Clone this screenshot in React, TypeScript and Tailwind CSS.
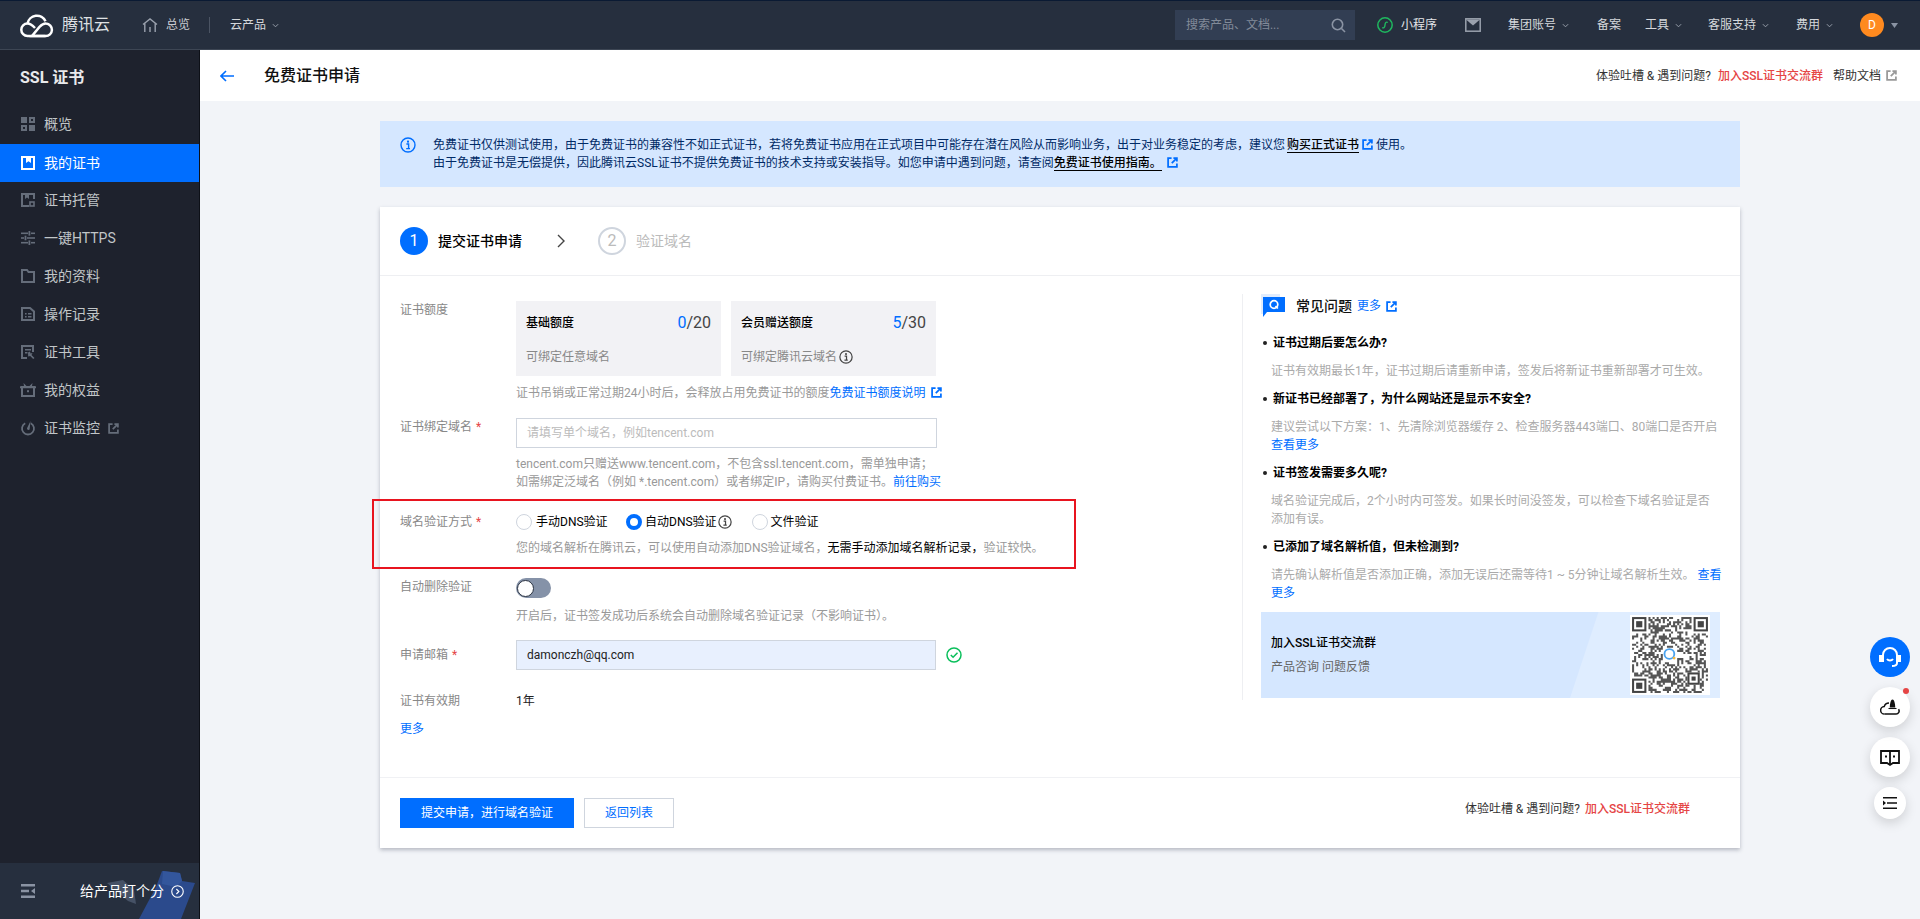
import { ReactNode } from "react";

const sideItems = [
  { title: "概览", icon: "grid" },
  { title: "我的证书", icon: "cert", active: true },
  { title: "证书托管", icon: "host" },
  { title: "一键HTTPS", icon: "sliders" },
  { title: "我的资料", icon: "folder" },
  { title: "操作记录", icon: "record" },
  { title: "证书工具", icon: "tool" },
  { title: "我的权益", icon: "gift" },
  { title: "证书监控", icon: "gauge", ext: true },
];

const faqs = [
  {
    q: "证书过期后要怎么办?",
    a: <>证书有效期最长1年，证书过期后请重新申请，签发后将新证书重新部署才可生效。</>,
  },
  {
    q: "新证书已经部署了，为什么网站还是显示不安全?",
    a: (
      <>
        建议尝试以下方案：1、先清除浏览器缓存 2、检查服务器443端口、80端口是否开启
        <br />
        <span className="text-[#006eff]">查看更多</span>
      </>
    ),
  },
  {
    q: "证书签发需要多久呢?",
    a: (
      <>
        域名验证完成后，2个小时内可签发。如果长时间没签发，可以检查下域名验证是否
        <br />
        添加有误。
      </>
    ),
  },
  {
    q: "已添加了域名解析值，但未检测到?",
    a: (
      <>
        请先确认解析值是否添加正确，添加无误后还需等待1 ~ 5分钟让域名解析生效。
        <span className="text-[#006eff]"> 查看</span>
        <br />
        <span className="text-[#006eff]">更多</span>
      </>
    ),
  },
];

function Chevron({ className = "" }: { className?: string }) {
  return (
    <svg viewBox="0 0 8 5" className={`h-[5px] w-[7px] ${className}`} fill="none" stroke="#9aa1ad" strokeWidth="1.1">
      <path d="M1 1l3 3 3-3" />
    </svg>
  );
}

function ExtIcon({ color = "#006eff", className = "" }: { color?: string; className?: string }) {
  return (
    <svg viewBox="0 0 12 12" className={`inline-block h-[11px] w-[11px] ${className}`} fill="none" stroke={color} strokeWidth="1.9">
      <path d="M5 1.2H1.2v9.6h9.6V7" />
      <path d="M7 1.2h3.8V5M10.5 1.5 5.2 6.8" />
    </svg>
  );
}

function InfoIcon({ size = 14, color = "#444" }: { size?: number; color?: string }) {
  return (
    <svg viewBox="0 0 16 16" width={size} height={size} className="inline-block shrink-0" fill="none">
      <circle cx="8" cy="8" r="7" stroke={color} strokeWidth="1.4" />
      <rect x="7" y="3.6" width="2" height="2" fill={color} />
      <path d="M6.4 7h2.200v4.200M6.200 11.600h3.800" stroke={color} strokeWidth="1.4" />
    </svg>
  );
}

function SideIcon({ name, color }: { name: string; color: string }) {
  const s = { fill: "none", stroke: color, strokeWidth: 2 };
  return (
    <svg viewBox="0 0 14 14" className="h-[14px] w-[14px] shrink-0 overflow-visible">
      {name === "grid" && (
        <g fill={color}>
          <rect width="6" height="6" />
          <rect x="8" width="6" height="6" />
          <rect y="8" width="6" height="6" />
          <rect x="8" y="8" width="6" height="6" />
          <rect x="10" y="2" width="2" height="2" fill="#1e222d" />
          <rect x="2" y="10" width="2" height="2" fill="#1e222d" />
        </g>
      )}
      {name === "cert" && (
        <g>
          <rect x="1" y="1" width="12" height="12" {...s} />
          <path d="M5 1h5v6L7.500 5.200 5 7z" fill={color} />
        </g>
      )}
      {name === "host" && (
        <g>
          <path d="M8 13H1V1h12v5" {...s} />
          <path d="M4 1h4v5L6 4.600 4 6z" fill={color} />
          <rect x="9" y="9" width="4" height="4" {...s} strokeWidth="1.6" />
        </g>
      )}
      {name === "sliders" && (
        <g fill={color}>
          <rect y="1.500" width="7" height="1.600" />
          <rect x="10" y="1.500" width="4" height="1.600" />
          <rect x="7.500" y="0" width="1.800" height="4.600" />
          <rect y="6.200" width="3" height="1.600" />
          <rect x="6" y="6.200" width="8" height="1.600" />
          <rect x="3.600" y="4.700" width="1.800" height="4.600" />
          <rect y="10.900" width="7" height="1.600" />
          <rect x="10" y="10.900" width="4" height="1.600" />
          <rect x="7.500" y="9.400" width="1.800" height="4.600" />
        </g>
      )}
      {name === "folder" && <path d="M1 13V1h5l1.500 2H13v10z" {...s} />}
      {name === "record" && (
        <g>
          <path d="M1 1h8l4 3.500V13H1z" {...s} />
          <path d="M4 6h1.600v1.600H4zM4 9h1.600v1.600H4zM7 6h3.500v1.600H7zM7 9h3.500v1.600H7z" fill={color} />
        </g>
      )}
      {name === "tool" && (
        <g>
          <path d="M6 13H1V1h11v6" {...s} />
          <path d="M4 4h6v1.600H4zM4 7h2.500v1.600H4z" fill={color} />
          <path d="M7 7.500l2-1 .5 2 2-.5L10.500 10l3 3-1.300 1-3-3-2 .5z" fill={color} />
        </g>
      )}
      {name === "gift" && (
        <g>
          <rect x="1" y="4" width="12" height="9" {...s} />
          <path d="M-1 3.200h16v2H-1zM2.500 0l3 3H3zM11.500 0l-3 3H11z" fill={color} />
          <rect x="6" y="7.200" width="2" height="2" fill={color} />
        </g>
      )}
      {name === "gauge" && (
        <g>
          <path d="M4.200 2.200A6 6 0 1 0 9.800 2.200" {...s} strokeWidth="1.800" />
          <path d="M9.500 0 6 7.200a1.600 1.600 0 0 0 2.600 1.400z" fill={color} />
        </g>
      )}
    </svg>
  );
}

function Sidebar() {
  return (
    <aside className="flex w-[200px] shrink-0 flex-col border-r border-[#0d1017] bg-[#1e222d]">
      <div className="flex h-[55px] items-center pl-[20px] text-[16px] font-bold text-[#e8e9eb]">SSL 证书</div>
      <nav className="flex-1">
        {sideItems.map((item) => (
          <div
            key={item.title}
            className={`flex h-[38px] items-center pl-[21px] text-[14px] ${
              item.active ? "mb-[-1px] mt-px bg-[#006eff] text-white" : "text-[#c1c6c8]"
            }`}
          >
            <SideIcon name={item.icon} color={item.active ? "#ffffff" : "#656d7a"} />
            <span className="ml-[9px]">{item.title}</span>
            {item.ext && <ExtIcon color="#656d7a" className="ml-[8px]" />}
          </div>
        ))}
      </nav>
      <div className="relative flex h-[56px] items-center overflow-hidden bg-[#262f3e] pl-[21px]">
        <svg viewBox="0 0 90 50" className="absolute bottom-0 left-[106px] h-[50px] w-[90px]">
          <path d="M1 14l16-3 11 10 2 14-8-3z" fill="#465266" />
          <path d="M33 50 50 18l6-16 18 2 2 8 13 2-14 36z" fill="#2b4a8c" />
          <path d="M57 2l17 2 2 8-6 6-14-3z" fill="#33569c" />
        </svg>
        <svg viewBox="0 0 14 14" className="relative h-[14px] w-[14px]" fill="#8a93a3">
          <path d="M0 0h14v2.400H0zM0 5.800h8v2.400H0zM0 11.600h14V14H0zM14 4v6l-4-3z" />
        </svg>
        <span className="relative ml-[45px] text-[14px] text-white">给产品打个分</span>
        <svg viewBox="0 0 14 14" className="relative ml-[7px] h-[13px] w-[13px]" fill="none" stroke="#fff" strokeWidth="1.200">
          <circle cx="7" cy="7" r="6.200" />
          <path d="M5.800 4.300 8.500 7l-2.700 2.700" />
        </svg>
      </div>
    </aside>
  );
}

function NavLink({ children, ml, chev = true }: { children: ReactNode; ml: string; chev?: boolean }) {
  return (
    <div className={`flex items-center ${ml} text-[12px] text-[#d5d8dc]`}>
      {children}
      {chev && <Chevron className="ml-[6px]" />}
    </div>
  );
}

function TopBar() {
  return (
    <header className="flex h-[50px] shrink-0 items-center border-b border-t border-b-[#3d4654] border-t-[#0a1a33] bg-[#262f3e]">
      <svg viewBox="0 0 34 25" className="ml-[20px] h-[25px] w-[34px]" fill="none" stroke="#fff" strokeWidth="2.500">
        <path d="M7.500 10.500A9.500 9.500 0 0 1 25.500 8.300" />
        <path d="M12 23h13.500a6.200 6.200 0 0 0 .5-12.400c-3-.2-4.500 1.300-6.500 3.300z" />
        <path d="M25.500 23H7.500a6.200 6.200 0 0 1 0-12.400c3.200 0 5 1.800 7.500 4.400" />
      </svg>
      <span className="ml-[8px] text-[16px] text-[#dfe1e4]">腾讯云</span>
      <svg viewBox="0 0 16 15" className="ml-[32px] h-[15px] w-[16px]" fill="none" stroke="#9aa1ad" strokeWidth="1.400">
        <path d="M1 6.500 8 1l7 5.500M2.800 5.500V14M13.200 5.500V14M8 9v5" />
      </svg>
      <span className="ml-[8px] text-[12px] text-[#c9ccd1]">总览</span>
      <div className="ml-[19px] h-[16px] w-px bg-[#4b5463]" />
      <NavLink ml="ml-[20px]">云产品</NavLink>

      <div className="ml-auto flex h-[30px] w-[180px] items-center justify-between bg-[#323e53] pl-[11px] pr-[9px] text-[12px] text-[#828b99]">
        <span>搜索产品、文档...</span>
        <svg viewBox="0 0 15 15" className="h-[15px] w-[15px]" fill="none" stroke="#8a93a3" strokeWidth="1.600">
          <circle cx="6.500" cy="6.500" r="5.200" />
          <path d="m10.500 10.500 3.500 3.500" />
        </svg>
      </div>
      <svg viewBox="0 0 16 16" className="ml-[22px] h-[16px] w-[16px]" fill="none">
        <circle cx="8" cy="8" r="7.200" stroke="#1fb85f" strokeWidth="1.500" />
        <path d="M5.200 10.500c1.500 1 2.700 0 2.800-2.500s1.300-3.500 2.800-2.500" stroke="#1fb85f" strokeWidth="1.400" />
      </svg>
      <span className="ml-[8px] text-[12px] text-[#e3e5e8]">小程序</span>
      <svg viewBox="0 0 16 14" className="ml-[28px] h-[14px] w-[16px]" fill="none">
        <rect x="0.800" y="0.800" width="14.400" height="12.400" stroke="#9aa1ad" strokeWidth="1.500" />
        <path d="M1 1.500h14L8 7.500z" fill="#9aa1ad" />
      </svg>
      <NavLink ml="ml-[27px]">集团账号</NavLink>
      <NavLink ml="ml-[28px]" chev={false}>备案</NavLink>
      <NavLink ml="ml-[24px]">工具</NavLink>
      <NavLink ml="ml-[26px]">客服支持</NavLink>
      <NavLink ml="ml-[27px]">费用</NavLink>
      <div className="ml-[27px] flex h-[24px] w-[24px] items-center justify-center rounded-full bg-[#ff8a1f] text-[12px] text-white">
        D
      </div>
      <svg viewBox="0 0 7 5" className="ml-[7px] mr-[22px] h-[5px] w-[7px]" fill="#8a93a3">
        <path d="M0 0h7L3.500 5z" />
      </svg>
    </header>
  );
}

function FormRow({ label, required, children }: { label: string; required?: boolean; children: ReactNode }) {
  return (
    <div className="flex">
      <div className="h-[18px] w-[116px] shrink-0 text-[12px] leading-[18px] text-[#888]">
        {label}
        {required && <span className="ml-[4px] text-[#e54545]">*</span>}
      </div>
      <div className="flex-1">{children}</div>
    </div>
  );
}

function Hint({ children }: { children: ReactNode }) {
  return <div className="text-[12px] leading-[18px] text-[#999]">{children}</div>;
}

function QuotaBox({ title, used, total, sub, info }: { title: string; used: number; total: number; sub: string; info?: boolean }) {
  return (
    <div className="h-[75px] w-[205px] bg-[#f2f2f5] px-[10px]">
      <div className="flex h-[44px] items-center justify-between">
        <span className="text-[12px] font-medium text-black">{title}</span>
        <span className="text-[16px] text-[#444]">
          <span className="text-[#006eff]">{used}</span>/{total}
        </span>
      </div>
      <div className="flex items-center gap-[2px] pt-[1px] text-[12px] leading-[22px] text-[#888]">
        {sub}
        {info && <InfoIcon />}
      </div>
    </div>
  );
}

function Radio({ checked }: { checked?: boolean }) {
  return (
    <span
      className={`block h-[16px] w-[16px] rounded-full bg-white ${
        checked ? "border-[4px] border-[#006eff]" : "border border-[#cfd5de]"
      }`}
    />
  );
}

function FormColumn() {
  return (
    <div className="w-[862px] shrink-0 pl-[20px] pt-[25px]">
      <FormRow label="证书额度">
        <div className="flex gap-[10px]">
          <QuotaBox title="基础额度" used={0} total={20} sub="可绑定任意域名" />
          <QuotaBox title="会员赠送额度" used={5} total={30} sub="可绑定腾讯云域名" info />
        </div>
        <div className="mt-[8px]">
          <Hint>
            证书吊销或正常过期24小时后，会释放占用免费证书的额度
            <span className="text-[#006eff]">免费证书额度说明</span>
            <ExtIcon className="ml-[5px] align-[-1px]" />
          </Hint>
        </div>
      </FormRow>

      <div className="mt-[16px]">
        <FormRow label="证书绑定域名" required>
          <div className="flex h-[30px] w-[421px] items-center border border-[#cfd5de] bg-white pl-[10px] text-[12px] text-[#bbb]">
            请填写单个域名，例如tencent.com
          </div>
          <div className="mt-[7px]">
            <Hint>tencent.com只赠送www.tencent.com，不包含ssl.tencent.com，需单独申请；</Hint>
            <Hint>
              如需绑定泛域名（例如 *.tencent.com）或者绑定IP，请购买付费证书。
              <span className="text-[#006eff]">前往购买</span>
            </Hint>
          </div>
        </FormRow>
      </div>

      <div className="relative mt-[22px]">
        <FormRow label="域名验证方式" required>
          <div className="flex h-[18px] items-center text-[12px] text-black">
            <Radio />
            <span className="ml-[4px] w-[90px]">手动DNS验证</span>
            <Radio checked />
            <span className="ml-[3px]">自动DNS验证</span>
            <span className="ml-[1px] mr-[20px] flex">
              <InfoIcon />
            </span>
            <Radio />
            <span className="ml-[3px]">文件验证</span>
          </div>
          <div className="mt-[8px]">
            <Hint>
              您的域名解析在腾讯云，可以使用自动添加DNS验证域名，
              <span className="text-black">无需手动添加域名解析记录，</span>
              验证较快。
            </Hint>
          </div>
        </FormRow>
        <div className="absolute left-[-28px] top-[-14px] h-[70px] w-[704px] border-2 border-[#e8141f]" />
      </div>

      <div className="mt-[21px]">
        <FormRow label="自动删除验证">
          <div className="flex h-[20px] w-[35px] items-center rounded-full bg-[#8592a8] pl-[1px] pr-[1px]">
            <span className="h-[17px] w-[17px] rounded-full border border-[#2a3342] bg-white" />
          </div>
          <div className="mt-[9px]">
            <Hint>开启后，证书签发成功后系统会自动删除域名验证记录（不影响证书）。</Hint>
          </div>
        </FormRow>
      </div>

      <div className="mt-[15px]">
        <div className="flex">
          <div className="flex h-[30px] w-[116px] shrink-0 items-center text-[12px] text-[#888]">
            申请邮箱<span className="ml-[4px] text-[#e54545]">*</span>
          </div>
          <div className="flex h-[30px] w-[420px] items-center border border-[#cfd5de] bg-[#e8f0fe] pl-[10px] text-[12px] text-[#222]">
            damonczh@qq.com
          </div>
          <svg viewBox="0 0 16 16" className="ml-[10px] mt-[7px] h-[16px] w-[16px]" fill="none" stroke="#0abf5b" strokeWidth="1.500">
            <circle cx="8" cy="8" r="7" />
            <path d="m4.800 8 2.300 2.300L11.500 5.800" />
          </svg>
        </div>
      </div>

      <div className="mt-[22px]">
        <FormRow label="证书有效期">
          <div className="text-[12px] leading-[18px] text-[#222]">1年</div>
        </FormRow>
      </div>
      <div className="mt-[10px] text-[12px] leading-[18px] text-[#006eff]">更多</div>
    </div>
  );
}

function qrPath() {
  const n = 37;
  let seed = 20231;
  const finder = (x: number, y: number) => x < 8 && y < 8;
  let d = "";
  for (let y = 0; y < n; y++) {
    for (let x = 0; x < n; x++) {
      seed = (seed * 1103515245 + 12345) & 0x7fffffff;
      const inFinder = finder(x, y) || finder(n - 1 - x, y) || finder(x, n - 1 - y);
      const inLogo = x > 14 && x < 22 && y > 14 && y < 22;
      const inAlign = x > 26 && x < 33 && y > 26 && y < 33;
      if (inFinder || inLogo || inAlign) continue;
      if ((seed >> 16) % 100 < 45) d += `M${x} ${y}h1v1h-1z`;
    }
  }
  return d;
}

function Finder({ x, y, size = 7 }: { x: number; y: number; size?: number }) {
  return (
    <g>
      <rect x={x + 0.5} y={y + 0.5} width={size - 1} height={size - 1} fill="none" stroke="#444" />
      <rect x={x + 2} y={y + 2} width={size - 4} height={size - 4} fill="#444" />
    </g>
  );
}

function QrCode() {
  return (
    <svg viewBox="-1 -1 39 39" className="relative h-[80px] w-[80px] bg-white">
      <path d={qrPath()} fill="#555" />
      <Finder x={0} y={0} />
      <Finder x={30} y={0} />
      <Finder x={0} y={30} />
      <Finder x={27} y={27} size={6} />
      <circle cx="18.200" cy="18" r="2.400" fill="none" stroke="#4aa3f0" strokeWidth="0.900" />
      <circle cx="20.500" cy="20" r="0.700" fill="#f5b942" />
    </svg>
  );
}

function FaqColumn() {
  return (
    <div className="flex-1 pl-[18px] pr-[20px] pt-[18px]">
      <div className="flex h-[24px] items-center">
        <svg viewBox="0 0 24 24" className="h-[24px] w-[24px] shrink-0">
          <path d="M0 0h19v3H0zM0 3h2v17H0z" fill="#e0ecfd" />
          <path d="M2 3h22v15H6l-4 5z" fill="#006eff" />
          <circle cx="13" cy="10.500" r="3.800" fill="none" stroke="#fff" strokeWidth="1.700" />
          <path d="m14.500 12 2.300 2.500" stroke="#fff" strokeWidth="1.700" />
        </svg>
        <span className="ml-[11px] text-[14px] font-medium text-[#111]">常见问题</span>
        <span className="ml-[5px] text-[12px] text-[#006eff]">更多</span>
        <ExtIcon className="ml-[5px]" />
      </div>
      <div className="mt-[16px]">
        {faqs.map((f) => (
          <div key={f.q} className="mb-[10px]">
            <div className="flex items-center text-[12px] font-bold leading-[18px] text-black">
              <span className="ml-[2px] mr-[6px] h-[4px] w-[4px] rounded-full bg-[#222]" />
              {f.q}
            </div>
            <div className="mt-[10px] whitespace-nowrap pl-[10px] text-[12px] leading-[18px] text-[#aaa]">{f.a}</div>
          </div>
        ))}
      </div>
      <div className="relative flex h-[86px] w-[459px] items-center justify-between overflow-hidden bg-[#d5e7ff] pl-[10px] pr-[10px]">
        <div className="absolute right-0 top-0 h-full w-[150px] bg-[#dfedff] [clip-path:polygon(19%_0,100%_0,100%_100%,0_100%)]" />
        <div className="relative">
          <div className="text-[12px] font-medium leading-[18px] text-black">加入SSL证书交流群</div>
          <div className="mt-[6px] text-[12px] leading-[18px] text-[#666]">产品咨询 问题反馈</div>
        </div>
        <QrCode />
      </div>
    </div>
  );
}

function FloatButtons() {
  const round = "flex items-center justify-center rounded-full bg-white shadow-[0_4px_12px_rgba(0,0,0,0.15)]";
  return (
    <div className="absolute right-[10px] top-[637px] flex w-[40px] flex-col items-center gap-[10px]">
      <div className="flex h-[40px] w-[40px] items-center justify-center rounded-full bg-[#006eff]">
        <svg viewBox="0 0 22 22" className="h-[22px] w-[22px]" fill="none" stroke="#fff" strokeWidth="2">
          <path d="M4 11V9a7 7 0 0 1 14 0v8c0 2-2 3-5 3" />
          <path d="M1 10h3v5H1zM18 10h3v5h-3z" fill="#fff" />
          <path d="M8 13c1.500 2 4.500 2 6 0" />
        </svg>
      </div>
      <div className={`relative h-[40px] w-[40px] ${round}`}>
        <svg viewBox="0 0 20 18" className="h-[18px] w-[20px]" fill="none" stroke="#111" strokeWidth="1.500">
          <path d="M4.500 16a3.700 3.700 0 0 1-.3-7.400 5 5 0 0 1 4.800-3.600" />
          <path d="M4.500 16H16a3 3 0 0 0 2.500-4.800" />
          <path d="M9.800 9.500c0-3 .7-8 2.700-8s2.700 5 2.700 8z" fill="#111" stroke="none" />
          <path d="M8.500 10.500h8" strokeWidth="1.100" />
        </svg>
        <span className="absolute right-[1px] top-[1px] h-[6px] w-[6px] rounded-full bg-[#e54545]" />
      </div>
      <div className={`h-[40px] w-[40px] ${round}`}>
        <svg viewBox="0 0 20 20" className="h-[20px] w-[20px]" fill="none" stroke="#111" strokeWidth="1.800">
          <path d="M10 4H1v12h6l3 2 3-2h6V4z" />
          <path d="M10 4v13" />
          <path d="M5 8.500h2v2H5zM13 8.500h2v2h-2z" fill="#111" stroke="none" />
        </svg>
      </div>
      <div className={`h-[32px] w-[32px] ${round}`}>
        <svg viewBox="0 0 14 12" className="h-[12px] w-[14px]" fill="#111">
          <path d="M0 0h14v1.500H0zM4 5.200h10v1.500H4zM0 10.500h14V12H0zM0 3.500 3 6 0 8.500z" />
        </svg>
      </div>
    </div>
  );
}

export default function App() {
  return (
    <div className="relative flex h-[919px] w-full flex-col overflow-hidden bg-[#f2f4f8] font-['Roboto','Noto_Sans_CJK_SC',sans-serif]">
      <TopBar />
      <div className="flex min-h-0 flex-1">
        <Sidebar />
        <main className="min-w-0 flex-1">
          <div className="flex h-[51px] items-center bg-white pl-[20px] pr-[23px]">
            <svg viewBox="0 0 14 12" className="h-[12px] w-[14px]" fill="none" stroke="#006eff" strokeWidth="1.600">
              <path d="M14 6H1M6 1 1 6l5 5" />
            </svg>
            <h1 className="ml-[30px] text-[16px] font-medium text-[#111]">免费证书申请</h1>
            <div className="ml-auto flex items-center text-[12px] text-[#333]">
              体验吐槽 &amp; 遇到问题?
              <span className="ml-[7px] font-medium text-[#e54545]">加入SSL证书交流群</span>
              <span className="ml-[10px]">帮助文档</span>
              <ExtIcon color="#999" className="ml-[5px]" />
            </div>
          </div>

          <div className="pl-[180px] pr-[180px] pt-[20px]">
            <div className="flex h-[66px] items-start bg-[#d5e7ff] pl-[20px] pt-[15px] text-[12px] leading-[18px] text-[#002a66]">
              <span className="mt-[1px] flex">
                <InfoIcon size={16} color="#006eff" />
              </span>
              <div className="ml-[17px] whitespace-nowrap">
                <div>
                  免费证书仅供测试使用，由于免费证书的兼容性不如正式证书，若将免费证书应用在正式项目中可能存在潜在风险从而影响业务，出于对业务稳定的考虑，建议您
                  <span className="ml-[2px] border-b border-black font-medium text-black">购买正式证书</span>
                  <ExtIcon className="mx-[3px] align-[-1px]" />
                  使用。
                </div>
                <div>
                  由于免费证书是无偿提供，因此腾讯云SSL证书不提供免费证书的技术支持或安装指导。如您申请中遇到问题，请查阅
                  <span className="border-b border-black font-medium text-black">免费证书使用指南。</span>
                  <ExtIcon className="ml-[5px] align-[-1px]" />
                </div>
              </div>
            </div>

            <section className="mt-[20px] h-[641px] bg-white shadow-[0_2px_4px_rgba(54,58,80,0.32)]">
              <div className="flex h-[69px] items-center border-b border-[#eeeff2] pl-[20px]">
                <span className="flex h-[28px] w-[28px] items-center justify-center rounded-full bg-[#006eff] text-[16px] text-white">1</span>
                <span className="ml-[10px] text-[14px] font-medium text-black">提交证书申请</span>
                <svg viewBox="0 0 9 14" className="ml-[35px] h-[14px] w-[9px]" fill="none" stroke="#444" strokeWidth="1.400">
                  <path d="m1 1 6 6-6 6" />
                </svg>
                <span className="ml-[32px] flex h-[28px] w-[28px] items-center justify-center rounded-full border-2 border-[#cfd5de] text-[16px] text-[#bbb]">2</span>
                <span className="ml-[10px] text-[14px] text-[#bbb]">验证域名</span>
              </div>

              <div className="flex h-[501px]">
                <FormColumn />
                <div className="mt-[18px] h-[406px] w-px shrink-0 bg-[#eeeff2]" />
                <FaqColumn />
              </div>

              <div className="flex h-[71px] items-center border-t border-[#f0f1f4] pl-[20px]">
                <button className="h-[30px] w-[174px] bg-[#006eff] text-[12px] text-white">提交申请，进行域名验证</button>
                <button className="ml-[10px] h-[30px] w-[90px] border border-[#cfd5de] bg-white text-[12px] text-[#006eff]">返回列表</button>
                <div className="mb-[8px] ml-auto mr-[50px] text-[12px] text-[#333]">
                  体验吐槽 &amp; 遇到问题?
                  <span className="ml-[5px] font-medium text-[#e54545]">加入SSL证书交流群</span>
                </div>
              </div>
            </section>
          </div>
        </main>
      </div>
      <FloatButtons />
    </div>
  );
}
